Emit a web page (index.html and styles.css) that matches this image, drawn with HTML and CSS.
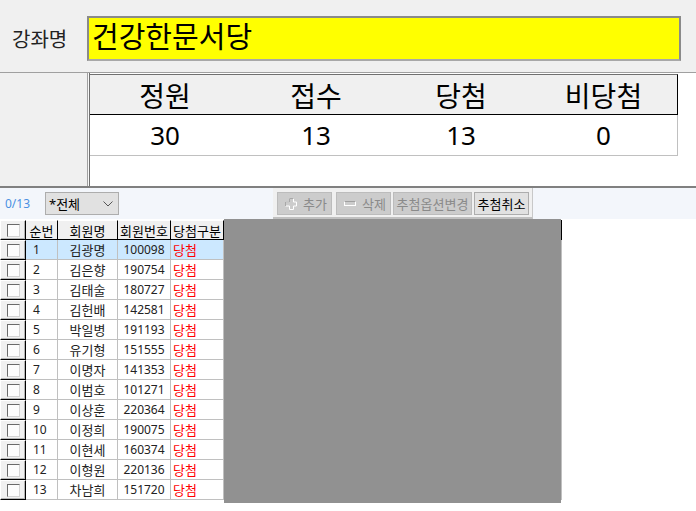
FILE: index.html
```html
<!DOCTYPE html>
<html lang="ko">
<head>
    <meta charset="UTF-8">
    <meta name="viewport" content="width=device-width, initial-scale=1.0">
    <title>강좌 추첨</title>
    <link rel="stylesheet" href="styles.css">
</head>
<body>
<div class="title-row">
    <div class="title-label">강좌명</div>
    <div class="title-input">건강한문서당</div>
</div>

<div class="summary-row">
    <div class="summary-side"></div>
    <div class="summary-box">
        <div class="summary-table">
            <div class="summary-head">정원</div>
            <div class="summary-head">접수</div>
            <div class="summary-head">당첨</div>
            <div class="summary-head">비당첨</div>
            <div class="summary-cell">30</div>
            <div class="summary-cell">13</div>
            <div class="summary-cell">13</div>
            <div class="summary-cell">0</div>
        </div>
    </div>
</div>

<div class="toolbar">
    <div class="count">0/13</div>
    <div class="select-box">
        <span>*전체</span>
        <svg class="select-arrow" width="10" height="6" viewBox="0 0 10 6"><path d="M0.5 0.5 L5 5 L9.5 0.5" fill="none" stroke="#555" stroke-width="1"/></svg>
    </div>
    <div class="btn-group">
        <div class="btn btn-off btn-icon btn-add">
            <svg width="12" height="12" viewBox="0 0 12 12">
                <path d="M4.5 0.5 H8.5 V4 H11.5 V8 H8.5 V11.5 H4.5 V8 H0.5 V4 H4.5 Z" fill="none" stroke="#ffffff"/>
                <path d="M4.5 4 V0.5 H8.5 M0.5 8 V4 H4.5" fill="none" stroke="#a8a8a8"/>
            </svg>
            <span>추가</span>
        </div>
        <div class="btn btn-off btn-icon">
            <svg width="12" height="12" viewBox="0 0 12 12">
                <rect x="0.5" y="3.5" width="11" height="4" fill="none" stroke="#ffffff"/>
                <path d="M0.5 3.5 H11.5" fill="none" stroke="#a0a0a0"/>
            </svg>
            <span>삭제</span>
        </div>
        <div class="btn btn-off btn-opt">추첨옵션변경</div>
        <div class="btn btn-on">추첨취소</div>
    </div>
</div>

<div class="grid-wrap">
    <div class="grid" id="grid"></div>
    <div class="grid-blank"></div>
    <div class="grid-edge"></div>
</div>

<script>
    const members = [
        [1, '김광명', '100098'],
        [2, '김은향', '190754'],
        [3, '김태술', '180727'],
        [4, '김헌배', '142581'],
        [5, '박일병', '191193'],
        [6, '유기형', '151555'],
        [7, '이명자', '141353'],
        [8, '이범호', '101271'],
        [9, '이상훈', '220364'],
        [10, '이정희', '190075'],
        [11, '이현세', '160374'],
        [12, '이형원', '220136'],
        [13, '차남희', '151720']
    ];

    function checkCell() {
        return '<div class="check-cell"><span class="check"></span></div>';
    }

    let html = checkCell();
    ['순번', '회원명', '회원번호', '당첨구분'].forEach(t => {
        html += `<div class="head-cell">${t}</div>`;
    });

    members.forEach((m, i) => {
        const cls = i === 0 ? 'cell selected' : 'cell';
        html += checkCell();
        html += `<div class="${cls} col-no">${m[0]}</div>`;
        html += `<div class="${cls} col-name">${m[1]}</div>`;
        html += `<div class="${cls} col-num">${m[2]}</div>`;
        html += `<div class="${cls} col-state">당첨</div>`;
    });

    document.getElementById('grid').innerHTML = html;
</script>
</body>
</html>
```
FILE: styles.css
```css
* {
    box-sizing: border-box;
}

body {
    margin: 0;
    height: 511px;
    overflow: hidden;
    background-color: #ffffff;
    font-family: "Noto Sans", "Noto Sans CJK KR", sans-serif;
    color: #000000;
}

.title-row {
    display: flex;
    align-items: center;
    height: 73px;
    padding-top: 5px;
    background-color: #f0f0f0;
    border-bottom: 1px solid #a0a0a0;
}

.title-label {
    width: 87px;
    padding-left: 12px;
    font-size: 20px;
    color: #222;
}

.title-input {
    width: 594px;
    height: 45px;
    padding-left: 3px;
    background-color: #ffff00;
    border: 2px solid #8a8a8a;
    border-bottom-color: #a8a8a8;
    font-size: 29px;
    line-height: 38px;
}

.summary-row {
    display: flex;
    height: 115px;
    border-bottom: 2px solid #808080;
}

.summary-side {
    width: 89px;
    background-color: #f0f0f0;
    border-right: 1px solid #f8f8f8;
    box-shadow: inset -1px 0 0 #a0a0a0;
}

.summary-box {
    flex: 1;
    padding-top: 1px;
    background-color: #ffffff;
    border-left: 1px solid #707070;
}

.summary-table {
    display: grid;
    grid-template-columns: 150px 152px 138px 148px;
    grid-template-rows: 41px 41px;
    width: 588px;
}

.summary-head {
    display: flex;
    align-items: center;
    justify-content: center;
    background-color: #f0f0f0;
    border-top: 1px solid #707070;
    border-bottom: 1px solid #000000;
    font-size: 28px;
}

.summary-head:nth-child(4) {
    border-right: 1px solid #000000;
}

.summary-cell {
    display: flex;
    align-items: center;
    justify-content: center;
    border-bottom: 1px solid #c0c0c0;
    font-size: 26px;
}

.summary-cell:last-child {
    border-right: 1px solid #c0c0c0;
}

.toolbar {
    display: flex;
    align-items: center;
    height: 31px;
    background-color: #f3f6fb;
}

.count {
    width: 45px;
    padding-left: 5px;
    font-size: 12px;
    color: #4a90e2;
}

.select-box {
    display: flex;
    align-items: center;
    justify-content: space-between;
    width: 74px;
    height: 23px;
    padding: 0 5px 0 3px;
    background-color: #e1e1e1;
    border: 1px solid #adadad;
    font-size: 13px;
}

.btn-group {
    display: flex;
    align-items: flex-start;
    gap: 2px;
    height: 31px;
    margin-left: 154px;
    padding: 4px 3px 0 4px;
    background-color: #f0f0f0;
    border-right: 1px solid #c8c8c8;
    border-bottom: 2px solid #c0c0c0;
}

.btn {
    display: flex;
    align-items: center;
    justify-content: center;
    height: 23px;
    font-size: 13px;
    white-space: nowrap;
    border: 1px solid #bcbcbc;
}

.btn-off {
    background-color: #cccccc;
    color: #8a8a8a;
}

.btn-on {
    width: 55px;
    background-color: #e1e1e1;
    border-color: #adadad;
}

.btn-icon {
    width: 55px;
    justify-content: flex-start;
    gap: 6px;
    padding-left: 7px;
}

.btn-add {
    margin-right: 2px;
}

.btn-opt {
    width: 79px;
}

.grid-wrap {
    display: flex;
    align-items: flex-start;
}

.grid {
    display: grid;
    grid-template-columns: 26px 32px 60px 53px 53px;
    grid-auto-rows: 20px;
    width: 224px;
    padding-top: 1px;
    font-size: 13px;
    background-color: #ffffff;
}

.grid-blank {
    width: 337px;
    height: 284px;
    background-color: #919191;
}

.grid-edge {
    width: 1px;
    height: 280px;
    margin-top: 1px;
    background: linear-gradient(#000000 0, #000000 20px, #c0c0c0 20px);
}

.check-cell {
    display: flex;
    align-items: center;
    justify-content: center;
    background-color: #f0f0f0;
    border-top: 1px solid #ffffff;
    border-left: 1px solid #ffffff;
    border-right: 1px solid #000000;
    border-bottom: 1px solid #000000;
    box-shadow: inset -1px -1px 0 #b4b4b4;
}

.check {
    width: 13px;
    height: 13px;
    background-color: #fcfcfc;
    border: 1px solid #d4d4d4;
    border-top-color: #6a6a6a;
    border-left-color: #6a6a6a;
}

.head-cell {
    display: flex;
    align-items: center;
    justify-content: center;
    background-color: #f0f0f0;
    border-top: 1px solid #ffffff;
    border-right: 1px solid #000000;
    border-bottom: 1px solid #000000;
    white-space: nowrap;
}

.cell {
    display: flex;
    align-items: center;
    background-color: #ffffff;
    border-right: 1px solid #c0c0c0;
    border-bottom: 1px solid #c0c0c0;
    color: #222;
}

.selected {
    background-color: #cce8ff;
}

.col-no {
    padding-left: 7px;
    font-size: 12px;
}

.col-name {
    justify-content: center;
}

.col-num {
    justify-content: center;
    font-size: 12px;
}

.col-state {
    padding-left: 2px;
    color: #ff0000;
}
```
